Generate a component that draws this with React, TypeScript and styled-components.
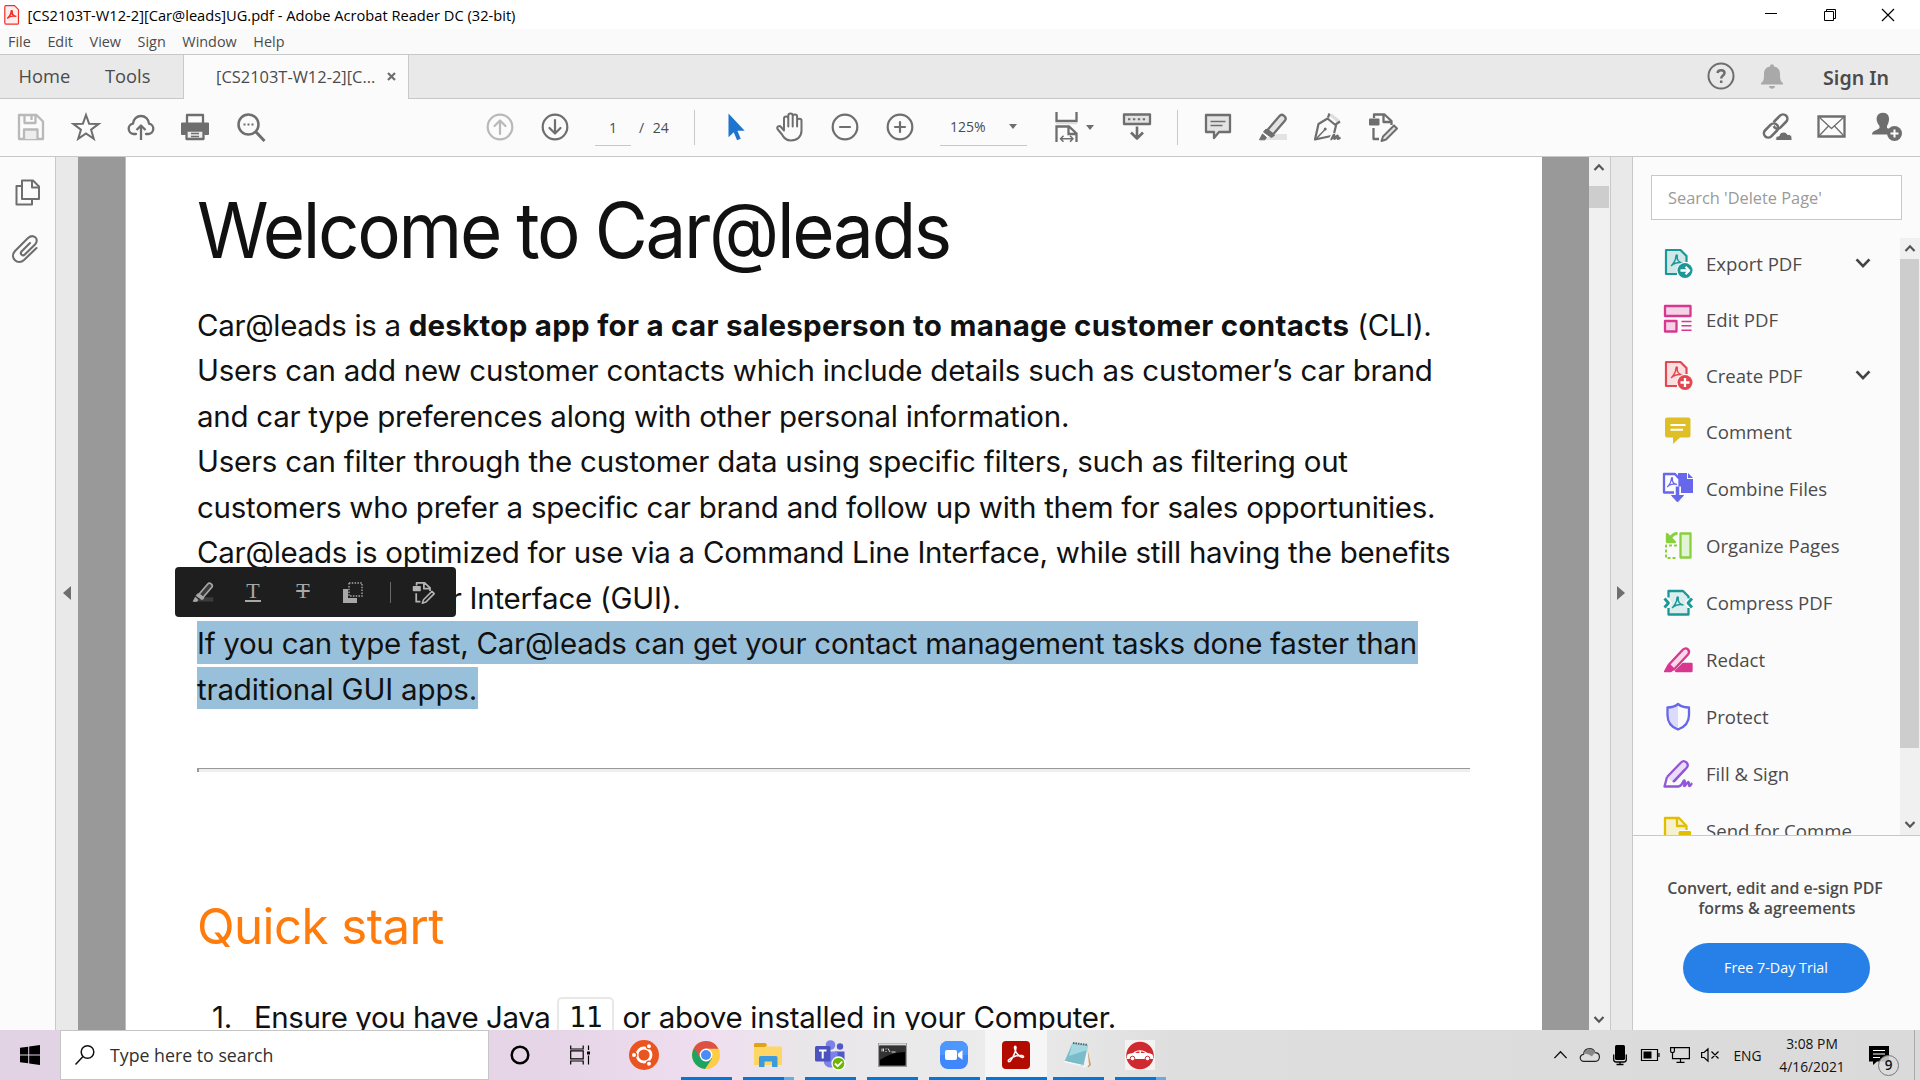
import React from "react";
import styled, { createGlobalStyle, css } from "styled-components";

const ui = `"Open Sans", "Noto Sans", sans-serif`;
const doc = `Inter, "Liberation Sans", sans-serif`;
const ink = "#6e6e6e";

const GlobalStyle = createGlobalStyle`
  * { box-sizing: border-box; }
  body { margin: 0; overflow: hidden; background: #fff; font-family: ${ui}; }
  svg { display: block; flex: none; overflow: visible; }
`;

const Screen = styled.div`
  width: 1920px;
  height: 1080px;
  display: flex;
  flex-direction: column;
  overflow: hidden;
  white-space: nowrap;
`;

/* ---------- window chrome ---------- */
const TitleBar = styled.header`
  height: 29px;
  display: flex;
  align-items: center;
  padding: 0 26px 0 4px;
  background: #fff;
`;
const WindowTitle = styled.span`
  margin-left: 7.5px;
  flex: 1;
  font-size: 14.65px;
  color: #000;
`;
const WindowButtons = styled.div`
  display: flex;
  gap: 46.5px;
  height: 100%;
  align-items: center;
`;
const MenuBar = styled.nav`
  height: 26px;
  display: flex;
  align-items: center;
  padding-left: 8px;
  gap: 16.6px;
  font-size: 14.4px;
  color: #4b4b4b;
  background: #fafafa;
  border-bottom: 1px solid #c8c8c8;
`;
const TabBar = styled.div`
  height: 44px;
  display: flex;
  background: #e9e9e9;
  box-shadow: inset 0 -1px #c8c8c8;
`;
const MainTab = styled.div<{ $w: number; $pad: number }>`
  width: ${(p) => p.$w}px;
  padding-left: ${(p) => p.$pad}px;
  line-height: 42px;
  font-size: 18.3px;
  color: #4b4b4b;
`;
const FileTab = styled.div`
  width: 226px;
  padding: 0 0 2px 32px;
  display: flex;
  align-items: center;
  gap: 12px;
  background: #fbfbfb;
  border: 1px solid #c8c8c8;
  border-width: 0 1px;
  font-size: 16.45px;
  color: #4b4b4b;
`;
const TabTools = styled.div`
  margin-left: auto;
  display: flex;
  align-items: center;
  padding-right: 31px;
`;
const SignIn = styled.span`
  margin-left: 36px;
  font: 600 19.6px "Noto Sans", ${ui};
  line-height: 44px;
  padding-top: 2px;
  color: #4b4b4b;
`;

/* ---------- toolbar ---------- */
const Toolbar = styled.div`
  height: 58px;
  display: flex;
  align-items: center;
  padding: 0 6px 1px 3px;
  background: #fbfbfb;
  border-bottom: 1px solid #c8c8c8;
`;
const Group = styled.div<{ $ml?: number }>`
  display: flex;
  margin-left: ${(p) => p.$ml ?? 0}px;
`;
const RightGroup = styled(Group)`
  margin-left: auto;
`;
const ToolButton = styled.div`
  width: 55px;
  display: flex;
  justify-content: center;
`;
const PageField = styled.div`
  width: 36px;
  height: 38px;
  margin-left: 13px;
  border-bottom: 1px solid #c8c8c8;
  text-align: center;
  font-size: 14px;
  line-height: 39px;
  color: #4b4b4b;
`;
const PageTotal = styled.div`
  width: 63px;
  padding-left: 8px;
  font-size: 14px;
  word-spacing: 5px;
  color: #4b4b4b;
`;
const Divider = styled.div`
  width: 1px;
  height: 35px;
  background: #c8c8c8;
`;
const ZoomField = styled.div`
  width: 87px;
  height: 38px;
  margin-left: 13px;
  padding: 0 10px;
  border-bottom: 1px solid #c8c8c8;
  display: flex;
  align-items: center;
  justify-content: space-between;
  font-size: 14px;
  color: #4b4b4b;
`;
const Caret = styled.i`
  border: 4.5px solid transparent;
  border-top: 5px solid ${ink};
  border-bottom: 0;
`;
const FitButton = styled.div`
  display: flex;
  align-items: center;
  gap: 2px;
  width: 82px;
  padding-left: 27px;
`;

/* ---------- body ---------- */
const Workspace = styled.div`
  height: 873px;
  display: flex;
`;
const LeftRail = styled.aside`
  width: 56px;
  background: #fbfbfb;
  border-right: 1px solid #c8c8c8;
  padding: 21px 0 0 11px;
  display: flex;
  flex-direction: column;
  gap: 26px;
`;
const Splitter = styled.div<{ $w: number; $lined?: boolean }>`
  width: ${(p) => p.$w}px;
  padding-bottom: 2px;
  background: #e9e9e9;
  display: flex;
  align-items: center;
  justify-content: center;
  ${(p) => p.$lined && css`border: 1px solid #c8c8c8; border-width: 0 1px; padding-right: 2px;`}
`;
const Arrow = styled.i<{ $dir: "left" | "right" }>`
  border: 7px solid transparent;
  border-${(p) => (p.$dir === "left" ? "right" : "left")}: 8px solid ${ink};
  border-${(p) => p.$dir}: 0;
`;
const Canvas = styled.main`
  width: 1511px;
  background: #999;
  display: flex;
  padding-left: 47px;
  overflow: hidden;
`;
const Page = styled.article`
  position: relative;
  width: 1417px;
  height: 873px;
  overflow: hidden;
  background: #fff;
  border-left: 1px solid #bdbdbd;
  padding: 33px 0 0 71px;
  font-family: ${doc};
  color: #111;
`;
const PageTitle = styled.h1`
  margin: 0 0 32.5px;
  width: 900px;
  height: 80px;
  font-size: 76.5px;
  line-height: 81px;
  font-weight: 400;
  letter-spacing: -2.4px;
  word-spacing: -2px;
  transform: scaleX(0.95);
  transform-origin: 0 0;
`;
const Line = styled.div<{ $ls: number }>`
  height: 45.56px;
  line-height: 45.56px;
  font-size: 29.5px;
  letter-spacing: ${(p) => p.$ls}px;
`;
const Strong = styled.b`
  letter-spacing: 0.27px;
`;
const Selected = styled.span<{ $w: number; $h: number }>`
  display: inline-block;
  vertical-align: top;
  width: ${(p) => p.$w}px;
  height: ${(p) => p.$h}px;
  line-height: 45px;
  background: #99c0da;
`;
const Rule = styled.hr`
  margin: 55.5px 0 0;
  width: 1273px;
  height: 4px;
  border: solid #eee;
  border-width: 1px 0 0 2px;
  border-color: #999 #eee #eee #999;
  background: #eee;
`;
const Section = styled.h2`
  margin: 124px 0 0;
  height: 60px;
  line-height: 60px;
  font-size: 49.2px;
  font-weight: 400;
  letter-spacing: -0.55px;
  color: #ff7c0c;
`;
const ListItem = styled.div`
  display: flex;
  margin-top: 35px;
  height: 52px;
  align-items: center;
  font-size: 29.5px;
  letter-spacing: -0.26px;
`;
const ListNumber = styled.span`
  width: 57px;
  padding-left: 15px;
`;
const ListLead = styled.span`
  letter-spacing: -0.42px;
`;
const Code = styled.code`
  width: 57px;
  height: 50px;
  margin: 10px 8px 0 7px;
  border: 2px solid #e8e8e8;
  border-radius: 5px;
  text-align: center;
  font: 28px/38px "DejaVu Sans Mono", monospace;
  letter-spacing: 0;
`;
const Popup = styled.div`
  position: absolute;
  left: 49px;
  top: 410px;
  width: 281px;
  height: 50px;
  border-radius: 4px;
  background: #1e1e1e;
  display: flex;
  align-items: center;
  padding-left: 17px;
`;
const PopupItem = styled.div<{ $w: number }>`
  width: ${(p) => p.$w}px;
`;
const PopupLetter = styled.div<{ $strike?: boolean }>`
  width: 16px;
  height: 20px;
  font: 22px/18px "Liberation Serif", serif;
  text-align: center;
  color: #a8a8a8;
  display: flex;
  justify-content: center;
  border-bottom: ${(p) => (p.$strike ? "0" : "2px solid #a8a8a8")};
  text-decoration: ${(p) => (p.$strike ? "line-through" : "none")};
`;
const PopupDivider = styled.div`
  width: 1px;
  height: 21px;
  background: #6a6a6a;
`;
const Scroll = styled.div<{ $w: number; $head: number; $thumb: number; $foot: number }>`
  width: ${(p) => p.$w}px;
  flex: none;
  background: #f0f0f0;
  display: flex;
  flex-direction: column;
  align-items: center;
  padding: ${(p) => p.$head}px 1px ${(p) => p.$foot}px 0;
  &::before { content: ""; order: 1; flex: none; width: 100%; height: ${(p) => p.$thumb}px; background: #cdcdcd; }
  & > :first-child { order: 0; }
  & > :last-child { order: 2; margin-top: auto; }
`;
const ScrollHead = styled.div<{ $h: number }>`
  height: ${(p) => p.$h}px;
`;

/* ---------- right panel ---------- */
const Panel = styled.aside`
  width: 287px;
  background: #fbfbfb;
  display: flex;
  flex-direction: column;
`;
const SearchBox = styled.div`
  width: 251px;
  height: 45px;
  margin: 18px 0 18px 18px;
  padding-left: 16px;
  border: 1px solid #c8c8c8;
  background: #fff;
  font-size: 16.37px;
  line-height: 45px;
  color: #9a9a9a;
`;
const ToolsArea = styled.div`
  height: 597px;
  display: flex;
  overflow: hidden;
`;
const ToolList = styled.div`
  flex: 1;
  margin-top: -3px;
`;
const ToolRow = styled.div<{ $h: number }>`
  height: ${(p) => p.$h}px;
  display: flex;
  align-items: center;
  padding: 0 29px 0 30px;
  font-size: 18.6px;
  color: #4b4b4b;
`;
const ToolLabel = styled.span`
  flex: 1;
  margin-left: 13px;
`;
const Promo = styled.div`
  flex: 1;
  border-top: 1px solid #c8c8c8;
  display: flex;
  flex-direction: column;
  align-items: center;
  padding: 42px 3px 0 0;
  text-align: center;
  font-size: 15.9px;
  font-weight: 600;
  line-height: 20px;
  color: #4b4b4b;
`;
const PromoLine = styled.div<{ $ml?: number }>`
  margin-left: ${(p) => p.$ml ?? 0}px;
`;
const TrialButton = styled.div`
  width: 187px;
  height: 50px;
  margin: 25px 0 0 2px;
  border-radius: 25px;
  background: #2680e8;
  color: #fff;
  font-weight: 400;
  font-size: 14.3px;
  line-height: 49px;
`;

/* ---------- taskbar ---------- */
const Taskbar = styled.footer`
  height: 50px;
  display: flex;
  background: linear-gradient(90deg, #e2d3e4 0, #e6d5e7 560px, #efdff0 720px, #e9e6e9 800px, #ececec 1000px, #dedede 1180px, #dadada 1920px);
`;
const Start = styled.div`
  width: 60px;
  display: flex;
  align-items: center;
  padding-left: 20px;
`;
const TaskSearch = styled.div`
  width: 429px;
  border: 1px solid #c6c6c6;
  background: #fff;
  display: flex;
  align-items: center;
  padding-left: 14px;
  gap: 15px;
  font-size: 17.75px;
  color: #2f2f2f;
`;
const TaskApp = styled.div<{ $active?: boolean; $open?: boolean; $more?: boolean }>`
  width: 62px;
  display: flex;
  align-items: center;
  justify-content: center;
  ${(p) => p.$active && css`background: #f6f6f6;`}
  ${(p) =>
    p.$open &&
    css`
      background-image: linear-gradient(90deg, #0078d7 ${p.$more ? 41 : 62}px, #64aee8 0);
      background-repeat: no-repeat;
      background-size: ${p.$active ? 61 : 51}px 3px;
      background-position: ${p.$active ? 1 : 6}px bottom;
    `}
`;
const Tray = styled.div`
  margin-left: auto;
  display: flex;
  align-items: center;
  font-size: 13.8px;
  color: #111;
`;
const TrayCell = styled.div<{ $w: number }>`
  width: ${(p) => p.$w}px;
  display: flex;
  justify-content: center;
  text-align: center;
  line-height: 23px;
`;
const ShowDesktop = styled.div`
  width: 6px;
  height: 50px;
  border-left: 1px solid #aaa;
`;
const NoticeIcon = styled.div`
  position: relative;
  width: 20px;
  height: 19px;
  margin-right: 10px;
`;
const NoticeCount = styled.span`
  position: absolute;
  left: 9px;
  top: 9px;
  width: 21px;
  height: 21px;
  border: 1px solid #777;
  border-radius: 50%;
  background: rgba(218, 218, 218, 0.85);
  font-size: 13.5px;
  font-weight: 600;
  line-height: 18px;
  text-align: center;
`;

/* ---------- icons ---------- */
type IconProps = { children: React.ReactNode; s?: number; c?: string; w?: number };
const Icon = ({ children, s = 30, c = ink, w = 2.3 }: IconProps) => (
  <svg width={s} height={s} viewBox="0 0 30 30" fill="none" stroke={c} strokeWidth={w} strokeLinejoin="round">
    {children}
  </svg>
);
const Chevron = ({ w = 10, up, c = "#555", sw = 2.2 }: { w?: number; up?: boolean; c?: string; sw?: number }) => (
  <svg width={w} height={w / 2 + 2} viewBox="0 0 10 7" fill="none" stroke={c} strokeWidth={sw}>
    <path d={up ? "M.5 6 5 1.3 9.5 6" : "M.5 1 5 5.7 9.5 1"} />
  </svg>
);
const acro = "M9 20c2-1.5 5-6 5-10 0-1.5 1.5-1.5 1.2 0-.5 4 2 6.5 5 7M9.5 19.500c2-2.500 7-3.500 11-2.500";

const SaveIcon = () => (
  <Icon c="#b9b9b9">
    <path d="M3 3h17.500l6.500 6.500V27H3z" /><path d="M8.500 3v8h11V3M15.500 4v4" /><path d="M8 27v-9.500h13.500V27" fill="#ededed" />
  </Icon>
);
const StarIcon = () => (
  <Icon w={2}><path strokeLinejoin="miter" d="m15 3 3.100 8.700 9.600.2-7.600 5.800 2.700 9.200-7.800-5.400-7.800 5.400 2.700-9.200-7.600-5.800 9.600-.2z" /></Icon>
);
const CloudUpIcon = () => (
  <Icon>
    <path strokeLinecap="round" d="M10 22H7.500a5.200 5.200 0 0 1-.5-10.300c.3-4.500 3.800-7.700 8-7.700s7.700 3.200 8 7.700A5.200 5.200 0 0 1 22.500 22H20" />
    <path d="M15 28V14M10.500 18 15 13.500l4.500 4.500" />
  </Icon>
);
const PrintIcon = () => (
  <Icon>
    <g transform="translate(-1 0)"><path d="M7 11V3h16v8" /><path d="M1.500 11h27v11.500h-4v-4h-19v4h-4z" fill={ink} strokeWidth="1" /><path d="M6.500 18.500h17V27h-17z" fill="#ededed" /><path d="M11 21.500h8M11 24.500h8" strokeWidth="1.500" /></g>
  </Icon>
);
const FindIcon = () => (
  <Icon w={2.500}>
    <circle cx="12.500" cy="12.500" r="10" /><path d="m20 20 8.500 9" strokeWidth="3" /><path d="M7.500 12.500h2M11.500 12.500h2M15.500 12.500h2" strokeWidth="2" />
  </Icon>
);
const CircleIcon = ({ d, c }: { d: string; c?: string }) => (
  <Icon c={c} w={2.200}><circle cx="15" cy="15" r="12.300" /><path d={d} strokeLinecap="round" /></Icon>
);
const PointerIcon = () => (
  <Icon c="none"><path fill="#1f74ce" d="M8.500 1.500v23.800l5.200-5 3.400 8 3.600-1.500-3.300-8h7.300z" /></Icon>
);
const HandIcon = () => (
  <Icon w={2}>
    <path strokeLinecap="round" transform="translate(1 -.5)" d="M8 18V7.200c0-2.800 4.300-2.800 4.300 0V15 4c0-2.800 4.400-2.800 4.400 0V15 5c0-2.700 4.400-2.700 4.400 0V15 9c0-2.500 4.400-2.500 4.400 0v10c0 6-4 10-10.500 10-5 0-7.500-3-9-6L1.500 17.500c-1-2.500 1.800-4 3.500-2L8 19" />
  </Icon>
);
const FitIcon = () => (
  <Icon>
    <g transform="translate(4 0)">
      <path strokeLinejoin="miter" d="M-1.500 0v9h20V0" /><path d="M-2 11.500h21" stroke="#ddd" strokeWidth="1.500" />
      <path strokeLinejoin="miter" d="M-1.500 30V14.500H11l7.500 7V30M10.500 14.500v7.500h8" /><path d="M3 26.700h11.500M5.500 23.700l-3 3 3 3M12 23.700l3 3-3 3" strokeWidth="1.600" />
    </g>
  </Icon>
);
const KeyboardIcon = () => (
  <Icon><path d="M2 2.500h26v9.500H2z" fill="#e3e3e3" /><path d="M6 7.200h18" strokeDasharray="2.400 2.500" strokeWidth="2" /><path d="M15 14.500v12M9 20.500l6 6 6-6" strokeWidth="2.600" /></Icon>
);
const CommentIcon = () => (
  <Icon><path d="M3 3h24v17H16l-5 6v-6H3z" fill="#e3e3e3" /><path d="M7.500 9.500h15M7.500 13.500h12" strokeWidth="1.400" /></Icon>
);
const HighlightIcon = ({ c = ink, f = "#e3e3e3", s }: { c?: string; f?: string; s?: number }) => (
  <Icon c={c} s={s}>
    <path d="M13 22h16v6H8z" fill={f} stroke="none" /><path d="M9.500 18 21.500 4c2.500-3 8 1 5.500 4.500L15 22.500z" fill={f} /><path d="m8 17 8.500 6.500-3 2-8-5.500zM4.500 22l4 3.500-1.500 2.300H1.500z" fill={c} strokeWidth="1" />
  </Icon>
);
const PenIcon = () => (
  <Icon w={2.200}>
    <path d="m16 3.500 9 7.500 2-2.800-8-6.500z" fill="#ddd" stroke="none" /><path d="m16.500 1.500-1.500 4M27 9.500l-4.500 3" />
    <path d="m14.500 6.500 8.500 7-2.500 10L2 27.500 5.500 12z" /><path d="m3 27 9-9.500" strokeWidth="1.500" /><circle cx="12.200" cy="17" r="1.500" fill={ink} stroke="none" /><path d="M17 28c2 0 2.500-5 3.500-5s-.5 4.500.5 4.500 2-3.500 3-3.500-.5 3.500.5 3.500 1.500-1.500 2.500-1.500l1.500 1" stroke="#fbfbfb" strokeWidth="4.500" /><path d="M17.500 27.500c2 0 2.500-5 3.500-5s-.5 4.500.5 4.500 2-3.500 3-3.500-.5 3.500.5 3.500 1.500-1 2.500-1.500" />
  </Icon>
);
const EditPageIcon = ({ c = ink, bg = "#e3e3e3", s }: { c?: string; bg?: string; s?: number }) => (
  <Icon c={c} s={s}>
    <path d="M6 6V2.500h10.500l7 6.500v4M15.500 3v7h7.500M5.500 16v11h5.500" /><rect x="1" y="6.500" width="10.500" height="7" rx="1" fill={c} stroke="none" />
    <path d="m26 13.500 3 3L18 27.500l-4.500 1.500 1.500-4.500z" fill={bg} strokeWidth="2" />
  </Icon>
);
const LinkIcon = () => (
  <Icon w={2.600}>
    <rect x="-8.200" y="-4.300" width="16.400" height="8.600" rx="4.300" transform="translate(18.300 9.500) rotate(-45)" />
    <path d="m12 10.500-2.500 3" stroke="#fbfbfb" strokeWidth="4" />
    <rect x="-8.200" y="-4.300" width="16.400" height="8.600" rx="4.300" transform="translate(9 18.500) rotate(-45)" />
    <path d="M14 28.500c-1-3 1-5 3-4.500 1-5 7-5 8.500-1.500 3-.5 4.500 1.500 4.500 3.500v2.500z" fill={ink} stroke="#fbfbfb" strokeWidth="1" />
  </Icon>
);
const MailIcon = () => (
  <Icon><path d="M1.500 4.500h26v20h-26z" strokeLinejoin="miter" /><path d="m2 5 12.500 11.500L27 5M2 24l9.500-10M27 24l-9.500-10" strokeWidth="1.300" /></Icon>
);
const PersonAddIcon = () => (
  <Icon c="none">
    <path fill={ink} d="M0 22.500c0-4 6-4.500 7.500-6.500v-2C2 7 5 .8 11 .8S19 7 15 14v2l4 2c-2.500 1-3 2.500-3.500 4.500z" />
    <circle cx="22.500" cy="21.500" r="7.500" fill={ink} /><path d="M22.500 17.500v8M18.500 21.500h8" stroke="#fff" strokeWidth="2" />
  </Icon>
);
const PagesIcon = () => (
  <Icon w={2}><path d="M11 2.500h11l6 6V21H11z" /><path d="M21 3v6.500h6.500M10 8H5.500v18.500H21V22" /></Icon>
);
const ClipIcon = () => (
  <Icon w={2.100}><path strokeLinecap="round" d="m20 9-8.500 8.500c-2 2.500 1.300 5 3.300 3L25 10.500c5-6-2-11-7-6.500L5 17c-6 7 3 14.500 9 9l12.500-12" transform="translate(-1 0)" /></Icon>
);

const PdfPage = ({ c, f, d }: { c: string; f: string; d: string }) => (
  <Icon c={c} w={2.200}>
    <path d="M15 26H3V2h15l5.500 5.500V15" fill={f} stroke="none" /><path d="M14 26H3V2h14.500l6 6v6" /><path d={acro} strokeWidth="1.500" transform="translate(-1 -2)" />
    <circle cx="22" cy="22.500" r="8.500" fill="#fbfbfb" stroke="none" /><circle cx="22" cy="22.500" r="7.500" fill={c} stroke="none" /><path d={d} stroke="#fff" strokeWidth="2.300" />
  </Icon>
);
const panelIcons: Record<string, React.ReactNode> = {
  export: <PdfPage c="#1b9799" f="#cfe7e7" d="M17.500 22.500h8M22.500 18.800l3.700 3.700-3.700 3.700" />,
  create: <PdfPage c="#e34850" f="#fadfe0" d="M22 18v9M17.500 22.500h9" />,
  edit: (
    <Icon c="#d83790"><rect x="2" y="2" width="25.500" height="10" fill="#f5d3e6" /><rect x="2" y="17" width="11.500" height="10.500" fill="#f5d3e6" /><path d="M18.500 17.500h10M18.500 21.800h10M18.500 26.200h10" strokeWidth="1.500" /></Icon>
  ),
  comment: (
    <Icon c="none"><path d="M4 1.500h21.500a2 2 0 0 1 2 2v16a2 2 0 0 1-2 2H17l-7 6.500v-6.500H4a2 2 0 0 1-2-2v-16a2 2 0 0 1 2-2z" fill="#dfbf28" /><path d="M7.500 9h15M7.500 13.700H20" stroke="#fff" strokeWidth="2" /></Icon>
  ),
  combine: (
    <Icon c="#6767ec">
      <path d="M15 0h9v6h6v14H15z" fill="#6767ec" stroke="none" /><path d="M25 0l5 5h-5z" fill="#6767ec" stroke="none" /><path d="M1 1h11l4.500 5v13.500H1z" fill="#fbfbfb" /><path d={acro} strokeWidth="1.500" transform="translate(-3.500 -3) scale(.85)" />
      <path d="M14.500 13.500v10" stroke="#fbfbfb" strokeWidth="7" /><path d="M14.500 13.500v11" strokeWidth="3.500" /><path d="M8.500 22.500h12l-6 6.500z" fill="#6767ec" strokeWidth="1" />
    </Icon>
  ),
  organize: (
    <Icon c="#88d13e"><rect x="17.500" y="2.500" width="10" height="24" fill="#e3f3d5" /><path d="M14 14.500H3V27h11" strokeDasharray="3 2" strokeWidth="2" /><path d="M4 3v8h8z" fill="#88d13e" /><path d="M7 7.500c2-3.500 5-5 7.500-5" strokeWidth="3" /></Icon>
  ),
  compress: (
    <Icon c="#1b9799">
      <path d="M6 3.500h13.500L25 9l-3 6 3 5v6H6v-6l3-5-3-5z" fill="#daeeee" stroke="none" /><path d="M5.500 9.500V3H20l5.500 5.500v2M5.500 20v6.500h20V20" /><path d={acro} strokeWidth="1.500" />
      <path d="M1.500 10.500 5.500 15l-4 4.500M29 10.500 25 15l4 4.500" strokeWidth="2.800" />
    </Icon>
  ),
  redact: (
    <Icon c="#d83790"><path d="M13 26l7-7h8.500v7z" fill="#d83790" /><path d="m6 19.500 14-15c3.500-3 8 1 5 5l-14 15z" fill="#f7d7e8" /><path d="m5 20 5 5-2 1.500H1.500z" fill="#d83790" strokeWidth="1.300" /></Icon>
  ),
  protect: (
    <Icon c="#6767ec"><path d="M15 2.500v25C7 24 4.500 19 4.500 13V5.500C9 5.500 12 4.500 15 2z" fill="#dcdcfa" stroke="none" /><path d="M15 2c3 2.500 6.500 3.500 11 3.500V13c0 7-4 12-11 14.500C8 25 4.500 20 4.500 13V5.500C9 5.500 12 4.500 15 2z" /></Icon>
  ),
  sign: (
    <Icon c="#9256d9"><path d="m4 18 14-14.500c3.500-3.500 9 1.500 5.500 5.500L10 23" fill="#e9ddf7" /><path d="M4 18 1.500 27.500h14c4 0 4.500-7 6-6s-1.500 5.500 0 5.500 2.500-4.500 4-4-.5 4 1 4 1.500-1.500 2.500-3" /><path d="m11 22.500 11-12" /></Icon>
  ),
  send: (
    <Icon c="#dfbf00"><path d="M2 2h14l7.500 8v17H2z" fill="#f7f0cc" /><path d="M14 2.500V10h8.500" /><rect x="15" y="14.500" width="13.500" height="13" rx="2" fill="#dfbf00" stroke="#fbfbfb" strokeWidth="1" /><path d="M18.500 21.500h7" stroke="#fff" /></Icon>
  ),
};

const tools: [string, string, number, boolean?][] = [
  ["export", "Export PDF", 56, true],
  ["edit", "Edit PDF", 56],
  ["create", "Create PDF", 56, true],
  ["comment", "Comment", 56],
  ["combine", "Combine Files", 58],
  ["organize", "Organize Pages", 57],
  ["compress", "Compress PDF", 57],
  ["redact", "Redact", 57],
  ["protect", "Protect", 57],
  ["sign", "Fill & Sign", 57],
  ["send", "Send for Comme", 57],
];

const AcrobatFile = () => (
  <svg width="16" height="20" viewBox="0 0 16 20" fill="none" stroke="#f0302a">
    <path d="M1.500.7h9l4 4v13.200a1.300 1.300 0 0 1-1.300 1.300H2A1.300 1.300 0 0 1 .8 18V2A1.300 1.300 0 0 1 1.500.7z" fill="#fdeeee" strokeWidth="1.200" />
    <path d={acro} strokeWidth="2" transform="translate(-4 -.5) scale(.8 .7)" />
  </svg>
);

/* ---------- taskbar icons ---------- */
const Cortana = () => <svg width="20" height="20"><circle cx="10" cy="10" r="8.300" fill="none" stroke="#000" strokeWidth="2.500" /></svg>;
const TaskView = () => (
  <svg width="22" height="20" viewBox="1 0 22 20" fill="none" stroke="#000" strokeWidth="1.200">
    <path d="M.7.500v3.500h12.500V.5M.7 5.800h12.500v8H.7zM.7 19.500V16h12.500v3.500M18.500.5V5M18.500 10.500v9" /><path d="M17 6.500h3v3h-3z" fill="#000" stroke="none" />
  </svg>
);
const Ubuntu = () => (
  <svg width="30" height="30" viewBox="0 0 30 30">
    <circle cx="15" cy="15" r="15" fill="#e95420" /><circle cx="15" cy="15" r="7" fill="none" stroke="#fff" strokeWidth="2.800" />
    {[[5, 15], [20, 6.3], [20, 23.7]].map(([x, y]) => <circle key={y} cx={x} cy={y} r="2.600" fill="#fff" stroke="#e95420" strokeWidth="1.200" />)}
  </svg>
);
const Chrome = () => (
  <svg width="28" height="28" viewBox="0 0 28 28">
    <circle cx="14" cy="14" r="14" fill="#fc4" /><path d="M14 14 1.900 7A14 14 0 0 0 13 28l7-10.500z" fill="#1da462" /><path d="M14 7.700h12.400A14 14 0 0 0 1.900 7L8.500 17.200z" fill="#dd5144" />
    <circle cx="14" cy="14" r="6.400" fill="#fff" /><circle cx="14" cy="14" r="5" fill="#4c8bf5" />
  </svg>
);
const Explorer = () => (
  <svg width="28" height="24" viewBox="0 0 28 24">
    <path d="M0 1.500A1.500 1.500 0 0 1 1.500 0h10L14 3.500h12.500A1.500 1.500 0 0 1 28 5v17H0z" fill="#ffd663" /><path d="M0 4V1.500A1.500 1.500 0 0 1 1.500 0h10L13 2l-2 2z" fill="#dfa21a" />
    <path d="M5 24V14.500a1.500 1.500 0 0 1 1.500-1.500h15.500a1.500 1.500 0 0 1 1.500 1.500V24h-5.500v-5.500h-7.500V24z" fill="#3b9bdc" />
  </svg>
);
const Teams = () => (
  <svg width="30" height="30" viewBox="0 0 30 30">
    <circle cx="15.500" cy="5" r="4.800" fill="#7b83eb" /><circle cx="25" cy="6.500" r="3.200" fill="#5059c9" /><path d="M20 11.500h9.500V20a5 5 0 0 1-9 2z" fill="#5059c9" /><path d="M9 11.500h13.500V21a7 7 0 0 1-13.500 2z" fill="#7b83eb" />
    <rect y="6" width="15.500" height="15.500" rx="1.500" fill="#4b53bc" /><path d="M4 10.500h7.500M7.700 10.500v8" stroke="#fff" strokeWidth="2" />
    <circle cx="23.500" cy="23.500" r="6.500" fill="#6bb700" stroke="#fff" strokeWidth="1.300" /><path d="m20 23.500 2.700 2.700 4.500-4.700" fill="none" stroke="#fff" strokeWidth="1.800" />
  </svg>
);
const Terminal = () => (
  <svg width="29" height="24" viewBox="0 0 29 24">
    <rect x=".7" y=".7" width="27.600" height="22.600" fill="#000" stroke="#999" strokeWidth="1.400" /><path d="M1 1.500h27" stroke="#ddd" strokeWidth="2" /><path d="M2 3h25v6C18 9 9 12 2 17z" fill="#333" />
    <path d="M4 5.500v3M5.500 5.500v3M8 5.500v1M8 8v1M10 5.500l2 3.500M13.500 9h4" stroke="#ddd" />
  </svg>
);
const Zoom = () => (
  <svg width="28" height="28" viewBox="0 0 28 28"><rect width="28" height="28" rx="8" fill="#4087fc" /><path d="M0 8a8 8 0 0 1 8-8h12a8 8 0 0 1 8 8v6H0z" fill="#4d97ff" /><rect x="5" y="9" width="12" height="10" rx="2" fill="#fff" /><path d="m18 12.500 4.500-3.300v9.600L18 15.500z" fill="#fff" /></svg>
);
const Acrobat = () => (
  <svg width="28" height="28" viewBox="0 0 28 28"><rect width="28" height="28" rx="4" fill="#b30b00" /><path d="M6.500 19c-1 2 1.500 2.500 3-.5 2-3.500 4.500-8 4.500-12 0-2-1.800-1.500-1.500.5.5 4 4.500 9 8 9.500 1.500 0 1.500-1.500-.5-2-4-.5-10 1-13.500 4.500z" fill="none" stroke="#fff" strokeWidth="1.500" /></svg>
);
const Notepad = () => (
  <svg width="28" height="26" viewBox="0 0 28 26"><path d="m22 1 5 22-3 2.500z" fill="#c9a26a" /><path d="m8 2 15 .5L25 23l-4 2z" fill="#f2f2f2" /><path d="M8.500 1 24 3l-4.500 20.500L.5 19.500z" fill="#7bbccb" /><path d="M8.500 1 24 3l-1 5L5 14z" fill="#a4d8e1" /><path d="m9 1 15 2" stroke="#566" strokeWidth="2" strokeDasharray="1.500 1" /><path d="m.5 19.500 19 4 2 1.500z" stroke="#fff" /></svg>
);
const CarApp = () => (
  <svg width="30" height="30" viewBox="0 0 30 30"><path d="M0 0h30v30H0z" fill="#f4f2f3" /><circle cx="15" cy="15.500" r="13.700" fill="#cf2a30" /><path d="M2 16c0-2 2-2.500 6-3 2-2 4-2.800 7-2.800s5 1 7 2.600c4 .5 6 1.500 6 3.200v3H2z" fill="#fff" /><path d="M10 13c1.500-1.200 2.500-1.500 4.500-1.500V13zM16 11.500c2 0 3 .5 4 1.500h-4z" fill="#cf2a30" /><circle cx="7.500" cy="18.500" r="2.300" fill="#fff" stroke="#cf2a30" /><circle cx="22.500" cy="18.500" r="2.300" fill="#fff" stroke="#cf2a30" /></svg>
);

export default function App() {
  return (
    <Screen>
      <GlobalStyle />
      <TitleBar>
        <AcrobatFile />
        <WindowTitle>[CS2103T-W12-2][Car@leads]UG.pdf - Adobe Acrobat Reader DC (32-bit)</WindowTitle>
        <WindowButtons>
          <svg width="12" height="12"><path d="M0 4.500h12" stroke="#000" /></svg>
          <svg width="12" height="12" fill="none" stroke="#000"><path d="M.5 2.500h9v9h-9zM2.500 2.500v-2h9v9h-2" /></svg>
          <svg width="12" height="12"><path d="m0 0 12 12M12 0 0 12" stroke="#000" strokeWidth="1.200" /></svg>
        </WindowButtons>
      </TitleBar>
      <MenuBar>
        {["File", "Edit", "View", "Sign", "Window", "Help"].map((m) => <span key={m}>{m}</span>)}
      </MenuBar>
      <TabBar>
        <MainTab $w={87} $pad={18.5}>Home</MainTab>
        <MainTab $w={96} $pad={18}>Tools</MainTab>
        <FileTab>
          <span>[CS2103T-W12-2][C...</span>
          <svg width="9" height="9"><path d="m1 1 7 7M8 1 1 8" stroke={ink} strokeWidth="2.200" /></svg>
        </FileTab>
        <TabTools>
          <Icon w={2}><circle cx="15" cy="14" r="12.500" /><path d="M11.500 11c.5-4 7-3.500 7 0 0 2.500-3.300 2.500-3.300 5.500M15.200 18.500v2.500" strokeWidth="2.500" /></Icon>
          <Group $ml={21}>
            <Icon c="none"><path fill="#a9a9a9" d="M13 4.500c0-3 4-3 4 0 5 1 6 4 6 8 0 6 1 7 3 8.500v1.500H4V21c2-1.500 3-2.500 3-8.500 0-4 1-7 6-8zM12 24h6c0 3.500-6 3.500-6 0z" /></Icon>
          </Group>
          <SignIn>Sign In</SignIn>
        </TabTools>
      </TabBar>
      <Toolbar>
        <Group>
          {[SaveIcon, StarIcon, CloudUpIcon, PrintIcon, FindIcon].map((I, i) => <ToolButton key={i}><I /></ToolButton>)}
        </Group>
        <Group $ml={194}>
          <ToolButton><CircleIcon c="#b9b9b9" d="M15 22V9M9.500 14 15 8.500l5.500 5.500" /></ToolButton>
          <ToolButton><CircleIcon d="M15 8v13M9.500 16l5.500 5.500 5.500-5.500" /></ToolButton>
        </Group>
        <PageField>1</PageField>
        <PageTotal>/ 24</PageTotal>
        <Divider />
        <Group $ml={12}>
          <ToolButton><PointerIcon /></ToolButton>
          <ToolButton><HandIcon /></ToolButton>
          <ToolButton><CircleIcon d="M10 15h10" /></ToolButton>
          <ToolButton><CircleIcon d="M10 15h10M15 10v10" /></ToolButton>
        </Group>
        <ZoomField>125%<Caret /></ZoomField>
        <FitButton><FitIcon /><Caret /></FitButton>
        <ToolButton><KeyboardIcon /></ToolButton>
        <Group $ml={13}><Divider /></Group>
        <Group $ml={12}>
          {[CommentIcon, HighlightIcon, PenIcon, EditPageIcon].map((I, i) => <ToolButton key={i}><I /></ToolButton>)}
        </Group>
        <RightGroup>
          {[LinkIcon, MailIcon, PersonAddIcon].map((I, i) => <ToolButton key={i}><I /></ToolButton>)}
        </RightGroup>
      </Toolbar>
      <Workspace>
        <LeftRail><PagesIcon /><ClipIcon /></LeftRail>
        <Splitter $w={22}><Arrow $dir="left" /></Splitter>
        <Canvas>
          <Page>
            <PageTitle>Welcome to Car@leads</PageTitle>
            <Line $ls={-0.34}>Car@leads is a <Strong>desktop app for a car salesperson to manage customer contacts</Strong> (CLI).</Line>
            <Line $ls={-0.24}>Users can add new customer contacts which include details such as customer’s car brand</Line>
            <Line $ls={-0.27}>and car type preferences along with other personal information.</Line>
            <Line $ls={-0.24}>Users can filter through the customer data using specific filters, such as filtering out</Line>
            <Line $ls={-0.26}>customers who prefer a specific car brand and follow up with them for sales opportunities.</Line>
            <Line $ls={-0.27}>Car@leads is optimized for use via a Command Line Interface, while still having the benefits</Line>
            <Line $ls={-0.24}>of a Graphical User Interface (GUI).</Line>
            <Line $ls={-0.27}><Selected $w={1221} $h={43}>If you can type fast, Car@leads can get your contact management tasks done faster than</Selected></Line>
            <Line $ls={-0.16}><Selected $w={281} $h={42}>traditional GUI apps.</Selected></Line>
            <Rule />
            <Section>Quick start</Section>
            <ListItem>
              <ListNumber>1.</ListNumber>
              <ListLead>Ensure you have Java</ListLead>
              <Code>11</Code>or above installed in your Computer.
            </ListItem>
            <Popup>
              <PopupItem $w={53}><HighlightIcon s={22} c="#a8a8a8" f="#3c3c3c" /></PopupItem>
              <PopupItem $w={50}><PopupLetter>T</PopupLetter></PopupItem>
              <PopupItem $w={48}><PopupLetter $strike>T</PopupLetter></PopupItem>
              <PopupItem $w={47}>
                <svg width="20" height="21"><path d="M0 7h5v9h9v5H0z" fill="#a8a8a8" /><rect x="6" y="1" width="13" height="13" fill="none" stroke="#a8a8a8" strokeWidth="1.400" strokeDasharray="1.500 1.300" /></svg>
              </PopupItem>
              <PopupItem $w={22}><PopupDivider /></PopupItem>
              <EditPageIcon s={23} c="#b4b4b4" bg="#1e1e1e" />
            </Popup>
          </Page>
        </Canvas>
        <Scroll $w={21} $head={7} $thumb={22} $foot={7}>
          <ScrollHead $h={22}><Chevron up /></ScrollHead>
          <Chevron />
        </Scroll>
        <Splitter $w={23} $lined><Arrow $dir="right" /></Splitter>
        <Panel>
          <SearchBox>Search 'Delete Page'</SearchBox>
          <ToolsArea>
            <ToolList>
              {tools.map(([id, label, h, more]) => (
                <ToolRow key={id} $h={h}>
                  {panelIcons[id]}
                  <ToolLabel>{label}</ToolLabel>
                  {more && <Chevron w={16} c="#444" sw={1.9} />}
                </ToolRow>
              ))}
            </ToolList>
            <Scroll $w={20} $head={7} $thumb={489} $foot={7}>
              <ScrollHead $h={14}><Chevron up /></ScrollHead>
              <Chevron />
            </Scroll>
          </ToolsArea>
          <Promo>
            <PromoLine>Convert, edit and e-sign PDF</PromoLine>
            <PromoLine $ml={4}>forms &amp; agreements</PromoLine>
            <TrialButton>Free 7-Day Trial</TrialButton>
          </Promo>
        </Panel>
      </Workspace>
      <Taskbar>
        <Start>
          <svg width="20" height="20"><path d="M0 2.800 8.200 1.700v7.800H0zM9.200 1.500 20 0v9.500H9.200zM0 10.500h8.200v7.800L0 17.200zM9.200 10.500H20V20L9.200 18.500z" /></svg>
        </Start>
        <TaskSearch>
          <svg width="20" height="20" fill="none" stroke="#111" strokeWidth="1.500"><circle cx="12.500" cy="7" r="6.300" /><path d="M8 11.500.5 19.500" /></svg>
          Type here to search
        </TaskSearch>
        <TaskApp><Cortana /></TaskApp>
        <TaskApp><TaskView /></TaskApp>
        <TaskApp><Ubuntu /></TaskApp>
        <TaskApp $open><Chrome /></TaskApp>
        <TaskApp $open $more><Explorer /></TaskApp>
        <TaskApp $open><Teams /></TaskApp>
        <TaskApp $open><Terminal /></TaskApp>
        <TaskApp $open><Zoom /></TaskApp>
        <TaskApp $open $active><Acrobat /></TaskApp>
        <TaskApp $open><Notepad /></TaskApp>
        <TaskApp $open $more><CarApp /></TaskApp>
        <Tray>
          <TrayCell $w={30}><Chevron w={15} up c="#111" sw={1} /></TrayCell>
          <TrayCell $w={30}>
            <svg width="20" height="14" fill="#ddd" stroke="#222" strokeWidth="1.200"><path d="M4 13.300a3.500 3.500 0 0 1-.5-7C4 3 6.500.7 9.500.7S14 2 15 4.700c3 0 4.400 2 4.400 4.300s-1.500 4.300-4 4.300z" /><path d="M3.500 6.300C6 5 8 6 12 8.500c1-2 2-3 3.500-3.500C14 2 12 .7 9.500.7S4 3 3.500 6.300z" fill="#888" stroke="none" /></svg>
          </TrayCell>
          <TrayCell $w={30}><svg width="14" height="20"><rect x="2" width="10" height="15" rx="1.500" /><path d="M.7 9.500v5c0 2 1 2.500 2.500 2.500h7.600c1.500 0 2.500-.5 2.500-2.500v-5M7 17v2.500M3.500 19.500h7" fill="none" stroke="#000" strokeWidth="1.300" /></svg></TrayCell>
          <TrayCell $w={30}><svg width="19" height="12"><path d="M.5.500h16v11H.5zM18 4v4" fill="none" stroke="#000" strokeWidth="1.200" /><path d="M2.500 2.500h8v7h-8z" /></svg></TrayCell>
          <TrayCell $w={30}><svg width="20" height="16" fill="none" stroke="#000" strokeWidth="1.200"><path d="M5 .6h14.400v11H2.500V6M10.500 11.500v4M6.500 15.400h8M.6.6h3.800V4c0 1-.8 1.700-1.900 1.700S.6 5 .6 4z" /></svg></TrayCell>
          <TrayCell $w={30}><svg width="18" height="14" fill="none" stroke="#000" strokeWidth="1.200"><path d="M.6 4.500h2.500L7 .8v12.400L3.100 9.500H.6zM10.500 3.500l7 7M17.500 3.500l-7 7" /></svg></TrayCell>
          <TrayCell $w={45}>ENG</TrayCell>
          <TrayCell $w={84}>3:08 PM<br />4/16/2021</TrayCell>
          <TrayCell $w={60}>
            <NoticeIcon>
              <svg width="20" height="19"><path d="M0 0h20v15.500H8L4 19v-3.500H0z" /><path d="M4 4.500h12M4 8h12M4 11.500h7" stroke="#fff" strokeWidth="1.200" /></svg>
              <NoticeCount>9</NoticeCount>
            </NoticeIcon>
          </TrayCell>
          <ShowDesktop />
        </Tray>
      </Taskbar>
    </Screen>
  );
}
